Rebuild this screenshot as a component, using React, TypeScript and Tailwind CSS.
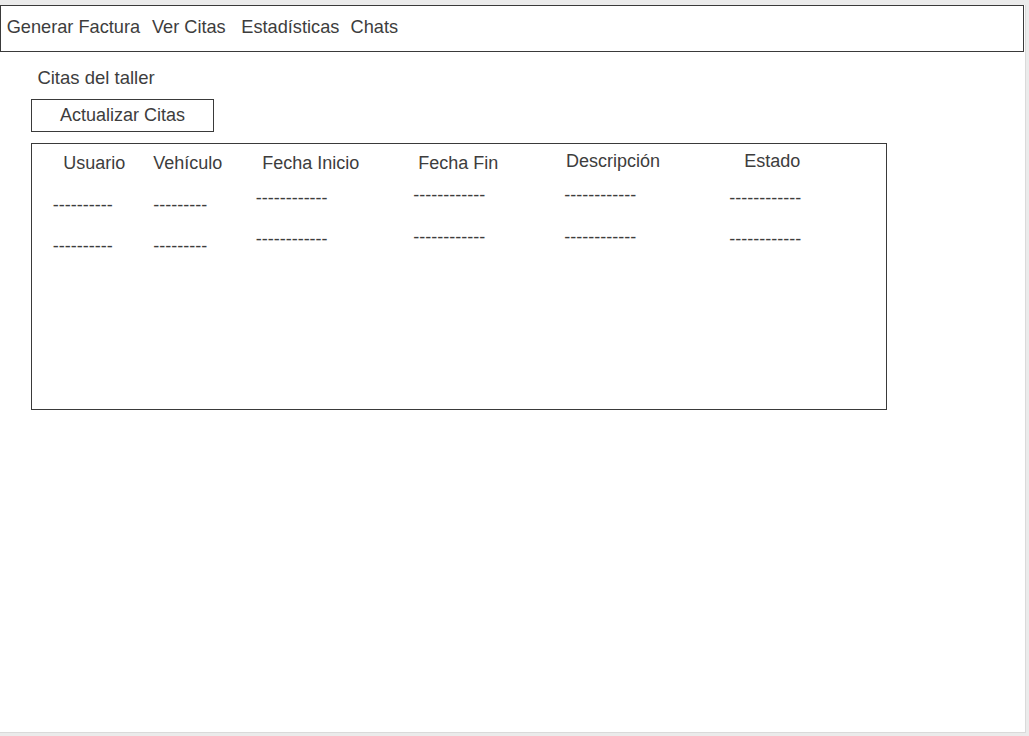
import React from "react";

type Col = {
  title: string;
  dashes: string;
  width: string;
  pt: string;
  hml: string;
  mt1: string;
  mt2: string;
};

const cols: Col[] = [
  { title: "Usuario", dashes: "----------", width: "w-[100.6px]", pt: "pt-[9px]", hml: "ml-[10.6px]", mt1: "mt-[21.5px]", mt2: "mt-[21.5px]" },
  { title: "Vehículo", dashes: "---------", width: "w-[102.4px]", pt: "pt-[9px]", hml: "ml-0", mt1: "mt-[21.5px]", mt2: "mt-[21.5px]" },
  { title: "Fecha Inicio", dashes: "------------", width: "w-[157.6px]", pt: "pt-[9px]", hml: "ml-[6.6px]", mt1: "mt-[14.8px]", mt2: "mt-[21px]" },
  { title: "Fecha Fin", dashes: "------------", width: "w-[151px]", pt: "pt-[9px]", hml: "ml-[5px]", mt1: "mt-[12.1px]", mt2: "mt-[21.5px]" },
  { title: "Descripción", dashes: "------------", width: "w-[165px]", pt: "pt-[6.5px]", hml: "ml-[1.7px]", mt1: "mt-[14.6px]", mt2: "mt-[21.5px]" },
  { title: "Estado", dashes: "------------", width: "w-[120px]", pt: "pt-[6.5px]", hml: "ml-[15px]", mt1: "mt-[17.3px]", mt2: "mt-[21px]" },
];

export default function App() {
  return (
    <div
      className="h-screen w-full bg-[#ebebeb] pt-[5px] text-[#3d3d3d] text-[18px] leading-[20px]"
      style={{ fontFamily: '"Liberation Sans", Arial, sans-serif' }}
    >
      <div className="w-[1026px] h-[728px] bg-white border-r border-b border-[#dadada] flex flex-col">
        <nav className="w-[1024px] h-[47px] border border-[#3a3a3a] flex items-start pt-[11px] pl-[5.7px] text-[18.2px]">
          <span className="whitespace-nowrap">Generar Factura</span>
          <span className="whitespace-nowrap ml-[11.8px]">Ver Citas</span>
          <span className="whitespace-nowrap ml-[15.6px]">Estadísticas</span>
          <span className="whitespace-nowrap ml-[11.2px]">Chats</span>
        </nav>

        <div className="pl-[37.4px] mt-[16px] text-[18.5px]">Citas del taller</div>

        <div className="pl-[31px] mt-[11px]">
          <button className="w-[183px] h-[33px] border border-[#3a3a3a] bg-white flex justify-center items-start pt-[5px] text-[18px] leading-[20px] text-[#3d3d3d]">
            Actualizar Citas
          </button>
        </div>

        <div className="ml-[31px] mt-[11px] w-[856px] h-[267px] border border-[#3a3a3a] flex pl-[20.7px]">
          {cols.map((c) => (
            <div key={c.title} className={`${c.width} shrink-0 flex flex-col ${c.pt}`}>
              <div className={`${c.hml} whitespace-nowrap`}>{c.title}</div>
              <div className={`${c.mt1} whitespace-nowrap`}>{c.dashes}</div>
              <div className={`${c.mt2} whitespace-nowrap`}>{c.dashes}</div>
            </div>
          ))}
        </div>
      </div>
    </div>
  );
}
